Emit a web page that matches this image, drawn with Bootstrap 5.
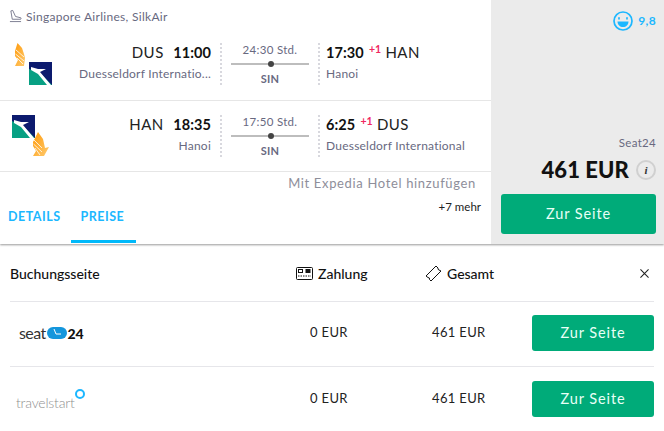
<!DOCTYPE html>
<html lang="de"><head><meta charset="utf-8">
<link href="https://cdn.jsdelivr.net/npm/bootstrap@5.3.0/dist/css/bootstrap.min.css" rel="stylesheet">
<style>
html,body{height:431px;overflow:hidden}
body{font-family:Lato,"Liberation Sans",sans-serif;color:#111;background:#fff;width:664px}
.topwrap{height:244px;box-shadow:0 1px 2px rgba(0,0,0,.4);position:relative}
.leftcol{width:491px}
.rightcol{width:173px;background:#ebebeb;padding:0 8px 0 10px}
.airline{height:43px;padding:8px 0 0 9px;font-size:12px;color:#68697f;letter-spacing:.3px}
.airline svg{margin:1px 4px 0 0}
.leg{height:57px;padding:0}
.leg2{padding-top:14px;border-top:1px solid #e6e6e6;border-bottom:1px solid #e6e6e6;box-sizing:content-box;height:56px}
.logos{width:64px;padding-left:11px;position:relative}
.dep{width:156px;padding-right:9px;text-align:right}
.arr{padding-left:6px}
.mid{width:100px;border-left:2px dotted #d8d8de;border-right:2px dotted #d8d8de;height:42px;text-align:center;padding:0 9px}
.codes{font-size:15px;line-height:18px;letter-spacing:.5px;color:#222}
.codes b{font-weight:700;color:#111;margin:0 0 0 5px;font-size:14.5px;letter-spacing:.1px}
.arr .codes b{margin:0 5px 0 0}
.arr sup{color:#f0285f;font-size:10.5px;font-weight:700;margin-right:0;top:-.5em;letter-spacing:0}
.place{font-size:12px;line-height:16px;color:#68697f;margin-top:4px;letter-spacing:.22px}
.dur{font-size:11.5px;line-height:14px;color:#68697f;letter-spacing:.3px}
.track{height:2px;background:#bdbdbd;margin:6px 0 8px;position:relative}
.track::after{content:"";position:absolute;left:37px;top:-2px;width:6px;height:6px;border-radius:50%;background:#444}
.stop{font-size:11px;line-height:12px;font-weight:700;color:#68697f;letter-spacing:.3px}
.foot{height:71px;position:relative}
.hotel{font-size:13px;color:#8e8e9a;text-align:right;padding:2px 15px 0 0;letter-spacing:.65px;line-height:18px}
.more{font-size:11.5px;color:#222;text-align:right;padding:8px 10px 0 0;line-height:14px}
.tabx{position:absolute;left:0;bottom:0;height:40px;font-size:12.5px;font-weight:700;letter-spacing:.5px;color:#1cb7ff}
.tabx span{display:block;padding:5px 10px 0 8px;height:40px}
.tabx span+span{padding:5px 10px 0 10px;margin-left:0;border-bottom:3px solid #00b9fa;width:65px}
.rate{color:#1cb7ff;font-size:12px;font-weight:700;padding-top:11px;letter-spacing:.3px;gap:5px}
.seller{font-size:11.5px;color:#68697f;line-height:14px;letter-spacing:.3px}
.price{font-size:22px;line-height:28px;font-weight:900;color:#111;margin-top:6px;gap:7px;letter-spacing:.1px}
.info{width:20px;height:20px;border-radius:50%;border:2px solid #d0d0d0;font:italic 700 11px/16px "Liberation Serif",serif;text-align:center;color:#333}
.go{background:#00ab79;border:0;border-radius:3px;color:#e8fff6;font-size:14.5px;letter-spacing:.9px;height:40px;padding:0;width:100%}
.go:hover{background:#00ab79;color:#e8fff6}
.rightcol .go{margin-top:10px;margin-bottom:10px}
.bookhead{height:58px;margin:0 0 0 10px;border-bottom:1px solid #e6e6ea;font-size:14px;font-weight:500;color:#111;padding:1px 5px 0 0;width:644px}
.colname{width:286px}
.colpay{width:129px;gap:5px}
.colsum{gap:5px}
.closex{margin-left:auto}
.bookrow{height:64px;margin-left:10px;width:644px;font-size:13px;color:#222;letter-spacing:.35px;padding-bottom:2px}
.bookrow+.bookrow{border-top:1px solid #e6e6ea;padding-bottom:0}
.logocell{width:300px}
.paycell{width:122px}
.sumcell{width:100px}
.btncell{width:122px}
.btncell .go{height:36px}
.seatlg{font-size:16px;color:#333;letter-spacing:-.6px;padding-left:9px;gap:1px}
.seatlg b{font-weight:900;color:#111;font-size:14px;letter-spacing:-.3px}
.tslg{font-size:14px;color:#8f8f8f;letter-spacing:-.2px;padding-left:6px;position:relative;top:4px;font-weight:300}
.tslg i{display:inline-block;width:10px;height:10px;border:2px solid #1cb7ff;border-radius:50%;position:relative;top:-9px}
</style></head>
<body>
<div class="topwrap d-flex">
 <div class="leftcol">
  <div class="airline d-flex align-items-start">
   <svg width="13" height="14" viewBox="0 0 14 14" fill="none" stroke="#68697f" stroke-width=".9"><path d="M2 1.500 L4 1 L7 7.500 L12.800 9 Q13.400 10.300 12.500 10.500 L3.500 10.500 Z"/><path d="M1 13 H13"/></svg>
   <span>Singapore Airlines, SilkAir</span>
  </div>
  <div class="leg d-flex">
   <div class="logos">
    <svg width="42" height="42" viewBox="0 0 42 42" class="d-block"><defs><linearGradient id="o1" x1="0" y1="0" x2="1" y2="1"><stop offset="0" stop-color="#ff9a0a"/><stop offset="1" stop-color="#ffcb70"/></linearGradient></defs>
     <path d="M6.500 0 L11 5 L13 11 L14 15 L13 23 L4 23 L7 17 L4 13 L4 8Z" fill="url(#o1)"/><path d="M5 7 L13 14 M4.500 11 L13 18 M6 15 L12 21" stroke="#fff" stroke-width=".8"/>
     <rect x="18" y="19" width="23" height="23" fill="#0c1a6e"/><path d="M18 26 L29 30 L41 42 L18 42Z" fill="#07a083"/><path d="M20 24 L27 26 L35 26 L29 29 L40 42 L36 42 L27 31 L20 27Z" fill="#fff"/>
    </svg>
   </div>
   <div class="dep"><div class="codes">DUS <b>11:00</b></div><div class="place">Duesseldorf Internatio...</div></div>
   <div class="mid"><div class="dur">24:30 Std.</div><div class="track"></div><div class="stop">SIN</div></div>
   <div class="arr"><div class="codes"><b>17:30</b><sup>+1</sup> HAN</div><div class="place">Hanoi</div></div>
  </div>
  <div class="leg leg2 d-flex">
   <div class="logos">
    <svg width="42" height="42" viewBox="0 0 42 42" class="d-block"><rect x="1" y="0" width="23" height="23" fill="#0c1a6e"/><path d="M1 6 L12 11 L24 23 L1 23Z" fill="#07a083"/><path d="M3 5 L10 7 L18 7 L12 10 L23 23 L19 23 L10 12 L3 8Z" fill="#fff"/>
     <path d="M27 17 L32 24 L34 33 L38 32 L33 41 L22 41 L25 36 L22 31 L22 27Z" fill="url(#o1)"/><path d="M23 25 L31 33 M22.500 29 L31 37 M24 33 L29 40" stroke="#fff" stroke-width=".8"/>
    </svg>
   </div>
   <div class="dep"><div class="codes">HAN <b>18:35</b></div><div class="place">Hanoi</div></div>
   <div class="mid"><div class="dur">17:50 Std.</div><div class="track"></div><div class="stop">SIN</div></div>
   <div class="arr"><div class="codes"><b>6:25</b><sup>+1</sup> DUS</div><div class="place">Duesseldorf International</div></div>
  </div>
  <div class="foot">
   <div class="hotel">Mit Expedia Hotel hinzufügen</div>
   <div class="more">+7 mehr</div>
   <div class="tabx d-flex"><span>DETAILS</span><span>PREISE</span></div>
  </div>
 </div>
 <div class="rightcol d-flex flex-column">
  <div class="rate d-flex justify-content-end align-items-center">
   <svg width="20" height="20" viewBox="0 0 20 20" fill="none" stroke="#1cb7ff" stroke-width="1.700"><circle cx="10" cy="10" r="9"/><path d="M6 6.800v1M14 6.800v1" stroke-linecap="round"/><path d="M4.500 10.500H15.500C15.500 14 13 16 10 16S4.500 14 4.500 10.500Z" fill="#1cb7ff" stroke="none"/></svg>
   <span>9,8</span>
  </div>
  <div class="mt-auto">
   <div class="seller text-end">Seat24</div>
   <div class="price d-flex justify-content-end align-items-center"><span>461 EUR</span><span class="info">i</span></div>
   <button class="btn go" type="button">Zur Seite</button>
  </div>
 </div>
</div>
<div class="bookhead d-flex align-items-center">
 <div class="colname">Buchungsseite</div>
 <div class="colpay d-flex align-items-center">
  <svg width="17" height="13" viewBox="0 0 17 13" fill="none" stroke="#111"><rect x=".5" y=".5" width="16" height="12" rx="1"/><rect x="2.500" y="2.500" width="4" height="3"/><rect x="10" y="2.500" width="4" height="3" fill="#111"/><path d="M2 9h13" stroke-dasharray="1.500 1"/></svg>
  <span>Zahlung</span></div>
 <div class="colsum d-flex align-items-center">
  <svg width="17" height="17" viewBox="0 0 17 17" fill="none" stroke="#111"><path d="M1 11 L11 1 L13 3 Q12.500 4.500 14 5 L16 6 L6 16 L4.500 14.500 Q5 12.500 3 12.500Z"/></svg>
  <span>Gesamt</span></div>
 <svg class="closex" width="9" height="9" viewBox="0 0 10 10" stroke="#222" stroke-width="1.200"><path d="M.5 .5L9.500 9.500M9.500 .5L.5 9.500"/></svg>
</div>
<div class="bookrow d-flex align-items-center">
 <div class="logocell"><div class="seatlg d-flex align-items-center">seat<svg width="20" height="14" viewBox="0 0 20 14"><rect y="1" width="20" height="12" rx="6" fill="#1496dc"/><path d="M7 3l2 5h5" stroke="#fff" fill="none"/></svg><b>24</b></div></div>
 <div class="paycell">0 EUR</div><div class="sumcell">461 EUR</div>
 <div class="btncell"><button class="btn go" type="button">Zur Seite</button></div>
</div>
<div class="bookrow d-flex align-items-center">
 <div class="logocell"><div class="tslg">travelstart<i></i></div></div>
 <div class="paycell">0 EUR</div><div class="sumcell">461 EUR</div>
 <div class="btncell"><button class="btn go" type="button">Zur Seite</button></div>
</div>
</body></html>
